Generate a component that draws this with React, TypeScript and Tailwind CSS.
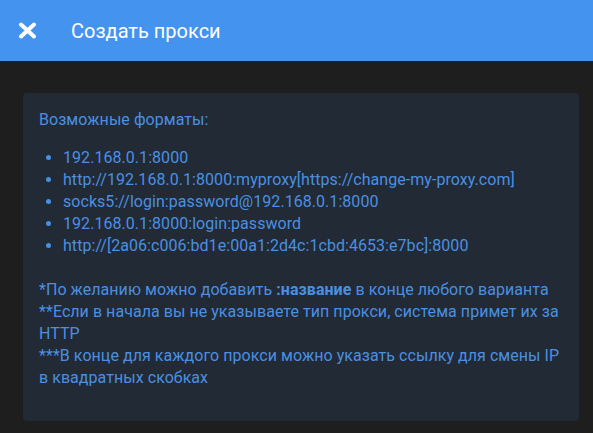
export default function App() {
  const formats = [
    "192.168.0.1:8000",
    "http://192.168.0.1:8000:myproxy[https://change-my-proxy.com]",
    "socks5://login:password@192.168.0.1:8000",
    "192.168.0.1:8000:login:password",
    "http://[2a06:c006:bd1e:00a1:2d4c:1cbd:4653:e7bc]:8000",
  ];

  return (
    <div
      className="min-h-screen bg-[#1e1e1e] text-[#4a90e2]"
      style={{ fontFamily: "Roboto, 'Liberation Sans', sans-serif" }}
    >
      {/* HEADER */}
      <header className="h-[61px] bg-[#4493ef] flex items-center px-[18px]">
        <svg width="19" height="17" viewBox="0 0 19 17" className="shrink-0">
          <path
            d="M3 2.5 L16 14.5 M16 2.5 L3 14.5"
            stroke="white"
            strokeWidth="4"
            strokeLinecap="round"
          />
        </svg>
        <h1 className="ml-[34px] text-[20px] font-normal text-white">
          Создать прокси
        </h1>
      </header>

      {/* CONTENT */}
      <main className="pl-[23px] pr-[14px] pt-[32px] pb-[13px]">
        <div className="bg-[#222a35] rounded-[4px] px-[16px] pt-[16px] pb-[32px] text-[16px] leading-[22px] tracking-[0.05px]">
          <p>Возможные форматы:</p>

          <ul className="list-disc pl-[24px] mt-[16px] mb-[22px]">
            {formats.map((f) => (
              <li key={f}>{f}</li>
            ))}
          </ul>

          <p>
            *По желанию можно добавить <b className="font-bold">:название</b> в конце любого варианта
            <br />
            **Если в начала вы не указываете тип прокси, система примет их за HTTP
            <br />
            ***В конце для каждого прокси можно указать ссылку для смены IP в квадратных скобках
          </p>
        </div>
      </main>
    </div>
  );
}
